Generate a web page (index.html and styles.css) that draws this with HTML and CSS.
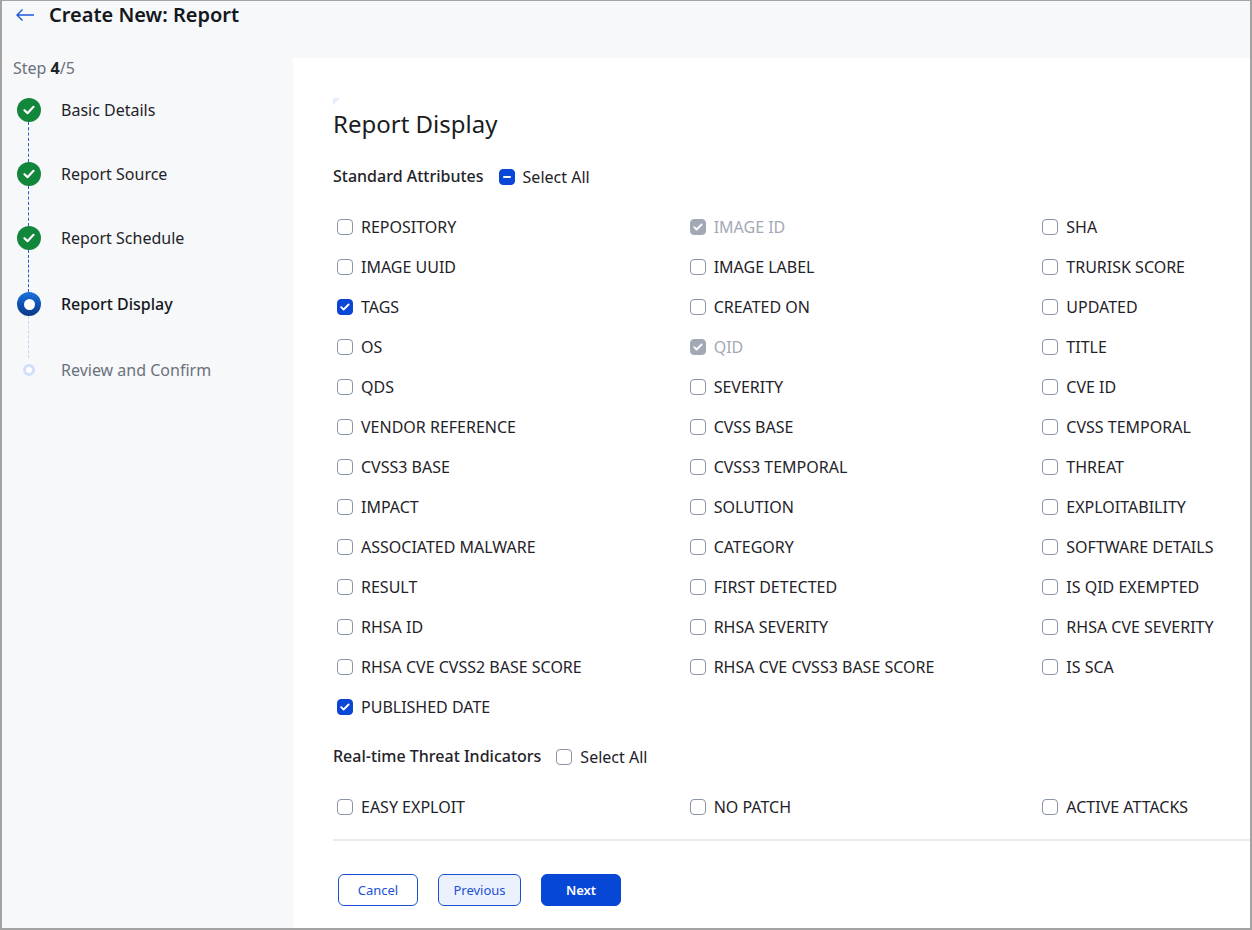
FILE: index.html
```html
<!DOCTYPE html>
<html>
<head>
<meta charset="utf-8">
<link rel="stylesheet" href="styles.css">
</head>
<body>
<div class="frame">
  <header class="header">
    <svg class="back" width="20" height="14" viewBox="0 0 20 14"><path d="M19 7H2M7.5 1.5L2 7l5.5 5.5" fill="none" stroke="#1f56d9" stroke-width="1.4"/></svg>
    <h1 class="title">Create New: Report</h1>
  </header>
  <div class="body">
    <aside class="sidebar">
      <div class="step-count">Step <b>4</b>/5</div>
      <div class="steps">
        <div class="step"><span class="dot done"><svg width="12" height="10" viewBox="0 0 12 10"><path d="M1.5 5.2l3 3 6-6.4" fill="none" stroke="#fff" stroke-width="2.2" stroke-linecap="round" stroke-linejoin="round"/></svg></span><span class="step-label">Basic Details</span></div>
        <div class="conn"></div>
        <div class="step"><span class="dot done"><svg width="12" height="10" viewBox="0 0 12 10"><path d="M1.5 5.2l3 3 6-6.4" fill="none" stroke="#fff" stroke-width="2.2" stroke-linecap="round" stroke-linejoin="round"/></svg></span><span class="step-label">Report Source</span></div>
        <div class="conn"></div>
        <div class="step"><span class="dot done"><svg width="12" height="10" viewBox="0 0 12 10"><path d="M1.5 5.2l3 3 6-6.4" fill="none" stroke="#fff" stroke-width="2.2" stroke-linecap="round" stroke-linejoin="round"/></svg></span><span class="step-label">Report Schedule</span></div>
        <div class="conn tall"></div>
        <div class="step"><span class="dot current"><span class="inner"></span></span><span class="step-label cur">Report Display</span></div>
        <div class="conn tall future"></div>
        <div class="step"><span class="dot-wrap"><span class="dot todo"></span></span><span class="step-label muted">Review and Confirm</span></div>
      </div>
    </aside>
    <main class="panel">
      <div class="deco"></div>
      <h2 class="panel-title">Report Display</h2>

      <div class="section-head">
        <span class="section-title">Standard Attributes</span>
        <span class="cb indet"><span class="bar"></span></span>
        <span class="select-all">Select All</span>
      </div>
      <div class="grid">
        <div class="item"><span class="cb"></span><span>REPOSITORY</span></div>
        <div class="item disabled"><span class="cb checked gray"><svg width="10" height="8" viewBox="0 0 10 8"><path d="M1.2 4.2l2.4 2.3 5-5" fill="none" stroke="#fff" stroke-width="1.8" stroke-linecap="round" stroke-linejoin="round"/></svg></span><span>IMAGE ID</span></div>
        <div class="item"><span class="cb"></span><span>SHA</span></div>

        <div class="item"><span class="cb"></span><span>IMAGE UUID</span></div>
        <div class="item"><span class="cb"></span><span>IMAGE LABEL</span></div>
        <div class="item"><span class="cb"></span><span>TRURISK SCORE</span></div>

        <div class="item"><span class="cb checked"><svg width="10" height="8" viewBox="0 0 10 8"><path d="M1.2 4.2l2.4 2.3 5-5" fill="none" stroke="#fff" stroke-width="1.8" stroke-linecap="round" stroke-linejoin="round"/></svg></span><span>TAGS</span></div>
        <div class="item"><span class="cb"></span><span>CREATED ON</span></div>
        <div class="item"><span class="cb"></span><span>UPDATED</span></div>

        <div class="item"><span class="cb"></span><span>OS</span></div>
        <div class="item disabled"><span class="cb checked gray"><svg width="10" height="8" viewBox="0 0 10 8"><path d="M1.2 4.2l2.4 2.3 5-5" fill="none" stroke="#fff" stroke-width="1.8" stroke-linecap="round" stroke-linejoin="round"/></svg></span><span>QID</span></div>
        <div class="item"><span class="cb"></span><span>TITLE</span></div>

        <div class="item"><span class="cb"></span><span>QDS</span></div>
        <div class="item"><span class="cb"></span><span>SEVERITY</span></div>
        <div class="item"><span class="cb"></span><span>CVE ID</span></div>

        <div class="item"><span class="cb"></span><span>VENDOR REFERENCE</span></div>
        <div class="item"><span class="cb"></span><span>CVSS BASE</span></div>
        <div class="item"><span class="cb"></span><span>CVSS TEMPORAL</span></div>

        <div class="item"><span class="cb"></span><span>CVSS3 BASE</span></div>
        <div class="item"><span class="cb"></span><span>CVSS3 TEMPORAL</span></div>
        <div class="item"><span class="cb"></span><span>THREAT</span></div>

        <div class="item"><span class="cb"></span><span>IMPACT</span></div>
        <div class="item"><span class="cb"></span><span>SOLUTION</span></div>
        <div class="item"><span class="cb"></span><span>EXPLOITABILITY</span></div>

        <div class="item"><span class="cb"></span><span>ASSOCIATED MALWARE</span></div>
        <div class="item"><span class="cb"></span><span>CATEGORY</span></div>
        <div class="item"><span class="cb"></span><span>SOFTWARE DETAILS</span></div>

        <div class="item"><span class="cb"></span><span>RESULT</span></div>
        <div class="item"><span class="cb"></span><span>FIRST DETECTED</span></div>
        <div class="item"><span class="cb"></span><span>IS QID EXEMPTED</span></div>

        <div class="item"><span class="cb"></span><span>RHSA ID</span></div>
        <div class="item"><span class="cb"></span><span>RHSA SEVERITY</span></div>
        <div class="item"><span class="cb"></span><span>RHSA CVE SEVERITY</span></div>

        <div class="item"><span class="cb"></span><span>RHSA CVE CVSS2 BASE SCORE</span></div>
        <div class="item"><span class="cb"></span><span>RHSA CVE CVSS3 BASE SCORE</span></div>
        <div class="item"><span class="cb"></span><span>IS SCA</span></div>

        <div class="item"><span class="cb checked"><svg width="10" height="8" viewBox="0 0 10 8"><path d="M1.2 4.2l2.4 2.3 5-5" fill="none" stroke="#fff" stroke-width="1.8" stroke-linecap="round" stroke-linejoin="round"/></svg></span><span>PUBLISHED DATE</span></div>
      </div>

      <div class="section-head second">
        <span class="section-title">Real-time Threat Indicators</span>
        <span class="cb"></span>
        <span class="select-all">Select All</span>
      </div>
      <div class="grid">
        <div class="item"><span class="cb"></span><span>EASY EXPLOIT</span></div>
        <div class="item"><span class="cb"></span><span>NO PATCH</span></div>
        <div class="item"><span class="cb"></span><span>ACTIVE ATTACKS</span></div>
      </div>

      <div class="footer">
        <button class="btn outline">Cancel</button>
        <button class="btn soft">Previous</button>
        <button class="btn primary">Next</button>
      </div>
    </main>
  </div>
</div>
</body>
</html>
```
FILE: styles.css
```css
* { box-sizing: border-box; }
html, body { margin: 0; padding: 0; }
body {
  font-family: "Noto Sans", "Open Sans", sans-serif;
  color: #1f2329;
  background: #fff;
}
.frame {
  width: 1252px;
  height: 930px;
  border-style: solid;
  border-color: #a3a3a3;
  border-width: 1px 2px 2px 2px;
  background: #f6f8fa;
  display: flex;
  flex-direction: column;
  overflow: hidden;
}
.header {
  height: 57px;
  flex: none;
  display: flex;
  align-items: flex-start;
  padding-left: 13px;
}
.back { margin-top: 7px; width: 20px; height: 14px; }
.title {
  margin: 0 0 0 14px;
  font-size: 20px;
  line-height: 28px;
  font-weight: 600;
  color: #14171c;
}
.body { flex: 1; display: flex; min-height: 0; }
.sidebar {
  width: 291px;
  flex: none;
  padding-left: 11px;
}
.step-count {
  font-size: 16px;
  line-height: 20px;
  color: #6b717c;
}
.step-count b { color: #1f2329; font-weight: 700; }
.steps {
  margin-top: 20px;
  padding-left: 4px;
  display: flex;
  flex-direction: column;
}
.step {
  display: flex;
  align-items: center;
  height: 24px;
}
.dot {
  width: 24px;
  height: 24px;
  border-radius: 50%;
  flex: none;
  display: flex;
  align-items: center;
  justify-content: center;
}
.dot.done { background: #12863a; }
.dot.current {
  background: linear-gradient(180deg, #1b73dc 0%, #0f4fb0 55%, #0a3a84 100%);
}
.dot.current .inner {
  width: 11px; height: 11px; border-radius: 50%; background: #fff;
}
.dot-wrap {
  width: 24px; height: 24px; flex: none;
  display: flex; align-items: center; justify-content: center;
}
.dot.todo {
  width: 12px; height: 12px;
  background: #fff;
  border: 3px solid #d3defa;
}
.step-label {
  margin-left: 20px;
  font-size: 16px;
  line-height: 24px;
  color: #1f2329;
}
.step-label.cur { font-weight: 500; color: #14171c; }
.step-label.muted { color: #6b717c; }
.conn {
  height: 40px;
  width: 12px;
  border-right: 1px dashed #2558d2;
}
.conn.tall { height: 42px; }
.conn.future { border-right-color: #c4d4f4; }

.panel {
  flex: 1;
  background: #fff;
  padding: 40px 0 0 40px;
  overflow: hidden;
  min-width: 0;
}
.deco {
  width: 7px;
  height: 10px;
  background: linear-gradient(135deg, #e9effa 0 45%, transparent 46%);
}
.panel-title {
  margin: 0;
  font-size: 24px;
  line-height: 32px;
  font-weight: 400;
  color: #1a1d22;
}
.section-head {
  margin-top: 24px;
  display: flex;
  align-items: center;
  height: 24px;
}
.section-head.second { margin-top: 17px; }
.section-title {
  font-size: 16px;
  font-weight: 500;
  color: #1f2329;
  margin-right: 15px;
}
.select-all {
  font-size: 16px;
  margin-left: 8px;
  margin-top: 2px;
  color: #1f2329;
}
.grid {
  margin-top: 19px;
  width: 1058px;
  display: grid;
  grid-template-columns: repeat(3, 1fr);
  grid-auto-rows: 40px;
}
.item {
  display: flex;
  align-items: center;
  padding-left: 4px;
  font-size: 16px;
  color: #1f2329;
}
.item .cb { margin-right: 8px; }
.item.disabled { color: #a2a9b5; }
.cb {
  width: 16px;
  height: 16px;
  flex: none;
  border: 1px solid #8b95a5;
  border-radius: 4px;
  background: #fff;
  display: inline-flex;
  align-items: center;
  justify-content: center;
}
.cb.checked { background: #0b47d6; border-color: #0b47d6; }
.cb.checked.gray { background: #a2a9b5; border-color: #a2a9b5; }
.cb.indet { background: #0b47d6; border-color: #0b47d6; margin-top: 2px; }
.cb.indet .bar { width: 8px; height: 2px; background: #fff; border-radius: 1px; }
.section-head .cb:not(.indet) { margin-top: 2px; }

.footer {
  margin-top: 12px;
  border-top: 2px solid #e7eaee;
  padding: 33px 0 0 5px;
  display: flex;
  gap: 20px;
}
.btn {
  height: 32px;
  border-radius: 6px;
  font-family: "Noto Sans", sans-serif;
  font-size: 13px;
  padding: 0;
  cursor: pointer;
}
.btn.outline { width: 80px; background: #fff; border: 1px solid #1c50d4; color: #1c50d4; }
.btn.soft { width: 83px; background: #ecf2fd; border: 1px solid #1c50d4; color: #1c50d4; }
.btn.primary { width: 80px; background: #0747d6; border: 1px solid #0747d6; color: #fff; font-weight: 600; }
```
